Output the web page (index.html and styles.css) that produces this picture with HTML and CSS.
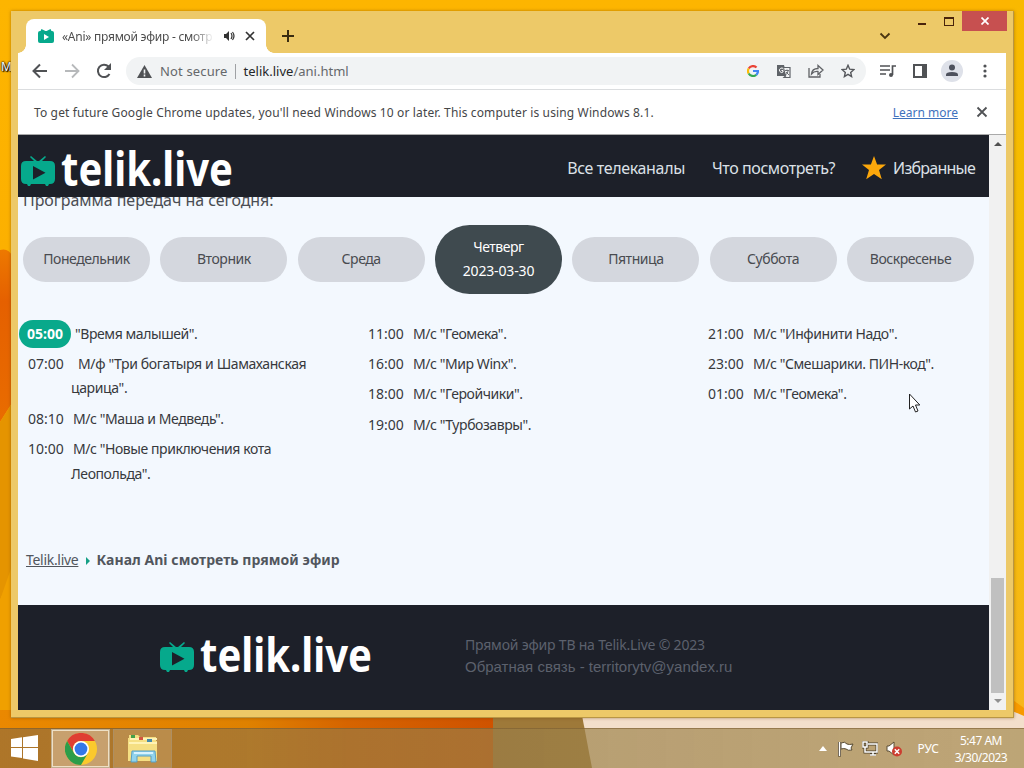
FILE: index.html
```html
<!DOCTYPE html>
<html lang="ru">
<head>
<meta charset="utf-8">
<title>«Ani» прямой эфир</title>
<link rel="stylesheet" href="styles.css">
</head>
<body>
<svg width="0" height="0" class="defs">
  <symbol id="tv" viewBox="0 0 34 30"><path fill="#06a98c" fill-rule="evenodd" d="M5 5H13L9 1L10 0L16 5H18L24 0L25 1L21 5H29Q34 5 34 10V23Q34 28 29 28H28L27 30H25L24 28H10L9 30H7L6 28H5Q0 28 0 23V10Q0 5 5 5ZM12 10V23.500L24.500 16.700Z"/></symbol>
</svg>
<div class="desktop">
  <svg class="wallpaper" viewBox="0 0 1024 768" preserveAspectRatio="none">
    <defs>
      <linearGradient id="ga" x2="0" y2="1"><stop stop-color="#fdb500"/><stop offset="1" stop-color="#faa600"/></linearGradient>
      <linearGradient id="gb" x2="0" y2="1"><stop stop-color="#ed7900"/><stop offset=".3" stop-color="#e56000"/><stop offset="1" stop-color="#e96c00"/></linearGradient>
      <linearGradient id="gc"><stop stop-color="#ea8800"/><stop offset=".5" stop-color="#df8100"/><stop offset=".7" stop-color="#d66400"/><stop offset="1" stop-color="#cf5200"/></linearGradient>
      <linearGradient id="gd" x2="0" y2="1"><stop stop-color="#f9b900"/><stop offset=".5" stop-color="#f3c000"/><stop offset="1" stop-color="#f8b61c"/></linearGradient>
    </defs>
    <rect width="1024" height="768" fill="url(#ga)"/>
    <path d="M0 250Q10 247 14 260V400L0 422Z" fill="url(#gb)"/>
    <path d="M0 422L14 400V570L0 600Z" fill="#e59400"/>
    <path d="M0 600L14 560V768H0Z" fill="#f0a000"/>
    <path d="M0 710H496V768H0Z" fill="url(#gc)"/>
    <path d="M493 710H582L594 768H493Z" fill="#9e7939"/>
    <path d="M581 710H1024V768H592Z" fill="#f3dfcb"/>
    <rect x="1010" width="14" height="709" fill="url(#gd)"/>
    <path d="M1010 698L1024 708V716L1010 710Z" fill="#f79a00"/>
  </svg>
  <div class="shortcut">M</div>

  <main class="window">
    <div class="tabstrip">
      <div class="tab">
        <svg class="favicon" width="17" height="15"><rect y="2" width="16" height="12" rx="2" fill="#06a98c"/><path d="M3 1l4 2M13 1L9 3" stroke="#06a98c" stroke-width="2"/><path d="M6 5v6l5-3z" fill="#fff"/></svg>
        <span class="tab-title">«Ani» прямой эфир - смотр</span>
        <svg class="speaker" width="12" height="12" fill="#333"><path d="M1 4h2l3-3v10L3 8H1z"/><path d="M8 3q2 3 0 6M9.500 2q3 4 0 8" fill="none" stroke="#333" stroke-width="1.200"/></svg>
        <svg width="10" height="10" stroke="#333" stroke-width="1.700"><path d="M1 1l8 8M9 1L1 9"/></svg>
      </div>
      <svg class="newtab" width="14" height="14" stroke="#3a2c10" stroke-width="2"><path d="M7 1v12M1 7h12"/></svg>
      <svg class="chevron" width="12" height="8" fill="none" stroke="#4b3510" stroke-width="1.800"><path d="M1.500 1.500L6 6l4.500-4.500"/></svg>
      <div class="controls">
        <i class="min"></i><i class="max"></i>
        <div class="close"><svg width="8" height="8" stroke="#fff" stroke-width="1.700"><path d="M.5.5l7 7M7.500.5l-7 7"/></svg></div>
      </div>
    </div>
    <div class="toolbar">
      <svg width="16" height="16" fill="none" stroke="#505255" stroke-width="2"><path d="M15 8H2M8 1.500L1.500 8L8 14.500"/></svg>
      <svg width="16" height="16" fill="none" stroke="#b7b9bb" stroke-width="1.800"><path d="M1 8h13M8 1.500L14.500 8L8 14.500"/></svg>
      <svg width="16" height="16" fill="none" stroke="#505255" stroke-width="2"><path d="M13.500 11A6.200 6.200 0 1 1 12.500 3.500L14 5"/><path d="M15 0v7H8z" fill="#505255" stroke="none"/></svg>
      <div class="omnibox">
        <svg width="15" height="13"><path d="M7.500 0L15 13H0z" fill="#505255"/><path d="M7.500 4.500v4M7.500 9.500v2" stroke="#f1f3f4" stroke-width="1.600"/></svg>
        <span class="insecure">Not secure</span><i class="bar"></i><span class="url"><b>telik.live</b>/ani.html</span>
        <span class="omni-icons">
          <svg width="12" height="12" fill="none" stroke-width="2.200"><path d="M9.500 2.500A5 5 0 0 0 1.700 3.500" stroke="#ea4335"/><path d="M1.700 3.500A5 5 0 0 0 1.700 8.500" stroke="#fbbc05"/><path d="M1.700 8.500A5 5 0 0 0 9.300 9.800" stroke="#34a853"/><path d="M9.300 9.800A5 5 0 0 0 11 6H6" stroke="#4285f4"/></svg>
          <svg width="15" height="15"><path d="M1 1h7l3 11H1z" fill="#5f6368"/><path d="M8 3.500h6v10H8l2-2" fill="#f1f3f4" stroke="#5f6368" stroke-width="1.200"/><path d="M7.500 5A2.200 2.200 0 1 0 7 8V6.500H5.500" fill="none" stroke="#fff"/><path d="M9 6.500h4M11 5.500v1M9 11q3-1 3-4M10 8l3 3" fill="none" stroke="#5f6368" stroke-width=".9"/></svg>
          <svg width="16" height="14" fill="none" stroke="#606266" stroke-width="1.300"><path d="M1 4v9h11v-3"/><path d="M3.500 10Q4 4.500 10 4.500V1.500L15 6l-5 4.500V7.500Q6 7 3.500 10z"/></svg>
          <svg width="14" height="14" fill="none" stroke="#55575b" stroke-width="1.400"><path d="M7 1.300l1.700 3.900 4.200.4-3.200 2.800.9 4.200L7 10.400l-3.600 2.200.9-4.200L1.100 5.600l4.200-.4z"/></svg>
        </span>
      </div>
      <div class="tools">
        <svg width="16" height="14" fill="none" stroke="#505255" stroke-width="1.700"><path d="M0 2h10M0 6h10M0 10h6M12.500 11V2H16"/><circle cx="11" cy="11" r="2" fill="#505255" stroke="none"/></svg>
        <svg width="14" height="14"><path d="M0 0h14v14H0z" fill="#505255"/><path d="M2 2h7v10H2z" fill="#fff"/></svg>
        <svg width="22" height="22"><circle cx="11" cy="11" r="11" fill="#dee1e9"/><g fill="#4d515d"><circle cx="11" cy="7.500" r="3"/><path d="M5 16v-1.500Q5 12 11 12t6 2.500V16z"/></g></svg>
        <svg width="4" height="14" fill="#505255"><circle cx="2" cy="2" r="1.600"/><circle cx="2" cy="7" r="1.600"/><circle cx="2" cy="12" r="1.600"/></svg>
      </div>
    </div>
    <div class="infobar"><span class="notice">To get future Google Chrome updates, you'll need Windows 10 or later. This computer is using Windows 8.1.</span><a class="learn">Learn more</a><svg width="12" height="12" stroke="#505255" stroke-width="1.800"><path d="M1.500 1.500l9 9M10.500 1.500l-9 9"/></svg></div>

    <div class="viewport">
      <div class="page">
        <header class="site-header">
          <svg class="logo" width="214" height="50"><use href="#tv" y="13" width="34" height="30"/><text x="40" y="43" textLength="172" lengthAdjust="spacingAndGlyphs" class="logo-text">telik.live</text></svg>
          <nav><a class="n1">Все телеканалы</a><a class="n2">Что посмотреть?</a><svg width="24" height="24"><path d="M12 0l3.100 8.500H24l-7 5.500 2.800 9.300L12 18l-7.800 5.300L7 14 0 8.500h8.900z" fill="#fca70b"/></svg><a class="n3">Избранные</a></nav>
        </header>
        <div class="heading"><h2>Программа передач на сегодня:</h2></div>
        <div class="days">
          <div class="day"><span>Понедельник</span></div><div class="day"><span>Вторник</span></div><div class="day"><span>Среда</span></div>
          <div class="day active"><span>Четверг</span><span class="date">2023-03-30</span></div>
          <div class="day"><span>Пятница</span></div><div class="day"><span>Суббота</span></div><div class="day"><span>Воскресенье</span></div>
        </div>
        <div class="schedule">
          <ul>
            <li class="now"><time>05:00</time>"Время малышей".</li>
            <li class="wide"><time>07:00</time>М/ф "Три богатыря и Шамаханская<br>царица".</li>
            <li><time>08:10</time>М/с "Маша и Медведь".</li>
            <li><time>10:00</time>М/с "Новые приключения кота<br>Леопольда".</li>
          </ul>
          <ul>
            <li><time>11:00</time>М/с "Геомека".</li>
            <li><time>16:00</time>М/с "Мир Winx".</li>
            <li><time>18:00</time>М/с "Геройчики".</li>
            <li><time>19:00</time>М/с "Турбозавры".</li>
          </ul>
          <ul>
            <li><time>21:00</time>М/с "Инфинити Надо".</li>
            <li><time>23:00</time>М/с "Смешарики. ПИН-код".</li>
            <li><time>01:00</time>М/с "Геомека".</li>
          </ul>
        </div>
        <div class="crumbs"><a>Telik.live</a><i></i><strong>Канал Ani смотреть прямой эфир</strong></div>
        <footer>
          <svg class="logo" width="214" height="50"><use href="#tv" y="13" width="34" height="30"/><text x="40" y="43" textLength="172" lengthAdjust="spacingAndGlyphs" class="logo-text">telik.live</text></svg>
          <div class="legal"><p class="copy">Прямой эфир ТВ на Telik.Live © 2023</p><p class="mail">Обратная связь - territorytv@yandex.ru</p></div>
        </footer>
      </div>
      <div class="scrollbar"><i class="up"></i><i class="thumb"></i><i class="down"></i></div>
    </div>
  </main>

  <div class="taskbar">
    <svg class="start" width="27" height="26" fill="#fff"><path d="M0 4L11 2.300V12H0zM12 2.200L27 0V12H12zM0 13H11V23L0 21.500zM12 13H27V26L12 23.500z"/></svg>
    <div class="task current"><svg width="32" height="32" viewBox="0 0 32 32"><circle cx="16" cy="16" r="16" fill="#fbc92d"/><path d="M2.100 8A16 16 0 0 1 29.900 8H16A8 8 0 0 0 9 20z" fill="#df3e32"/><path d="M2.100 8A16 16 0 0 0 16 32L23 20A8 8 0 0 1 9 20z" fill="#2c9d4a"/><circle cx="16" cy="16" r="8" fill="#fff"/><circle cx="16" cy="16" r="6.400" fill="#3478e8"/></svg></div>
    <div class="task"><svg width="32" height="30"><path d="M2 4V1h9l2 2h16v4h1v20H1V4z" fill="#f5df83"/><path d="M3 5h27M2 9h28" stroke="#fff3b5" stroke-width="2"/><path d="M4 1h4v3H4z" fill="#43a04a"/><path d="M12 3h4v3h-4z" fill="#d45440"/><path d="M20 5h5v3h-5z" fill="#458aaa"/><path d="M5 17h23l1 11h-5v-6H10v6H4z" fill="#91d3ec" stroke="#599fc3"/><path d="M7 19h19" stroke="#d7f3ff" stroke-width="2"/></svg></div>
    <div class="tray">
      <svg width="8" height="5"><path d="M0 5l4-5 4 5z" fill="#fff"/></svg>
      <svg width="16" height="16"><path d="M1.500 1v14.500" stroke="#493d29" stroke-width="3"/><path d="M3 2q4-2 6 1 2 1 6 0l-2 4 1 2q-4 1-6-1-2-1-5 0z" fill="#fff" stroke="#584b32"/><path d="M1.500 1v14" stroke="#fff" stroke-width="1.500"/></svg>
      <svg width="16" height="15" fill="none"><path d="M6 3h9v8H6M8 14h6M11 11v3M1 1h4v5H1zM3 6v5h3" stroke="#4c422e" stroke-width="3"/><path d="M6 3h9v8H6M8 14h6M11 11v3M1 1h4v5H1zM3 6v5h3" stroke="#fff" stroke-width="1.500"/></svg>
      <svg width="17" height="16"><path d="M1 5h2l5-4v13L3 10H1z" fill="#fff" stroke="#5a4d35"/><circle cx="11" cy="10.500" r="5" fill="#cc3d30"/><path d="M8.800 8.300l4.400 4.400M13.200 8.300l-4.400 4.400" stroke="#fff" stroke-width="1.500"/></svg>
      <span class="lang">РУС</span>
      <div class="clock"><span>5:47 AM</span><span>3/30/2023</span></div>
    </div>
  </div>
  <svg class="cursor" width="13" height="20"><path d="M1.500 1v15l3.500-3 2.500 6 2.500-1-2.500-6h4.300z" fill="#fff" stroke="#222"/></svg>
</div>
</body>
</html>
```
FILE: styles.css
```css
* { box-sizing: border-box; }
body { margin: 0; font-family: "Noto Sans", "Open Sans", sans-serif; }
svg { display: block; flex: none; }
i { font-style: normal; }
span, a, strong, h2, p { white-space: nowrap; }
.defs { position: absolute; }
.desktop { position: relative; width: 1024px; height: 768px; overflow: hidden; display: flex; flex-direction: column; }
.wallpaper { position: absolute; inset: 0; width: 1024px; height: 768px; }
.shortcut { position: absolute; left: 1px; top: 58px; font-size: 12px; color: #fff; text-shadow: 1px 1px 1px #000, 0 0 2px #000, 0 0 2px #000; }
.window { position: relative; width: 1003px; height: 707px; margin: 11px 0 0 11px; padding: 0 7px 6px; background: #edc968; border: 1px solid #b99644; border-width: 0 1px 1px 0; display: flex; flex-direction: column; box-shadow: 0 0 3px rgba(110,65,0,.5); }
.tabstrip { height: 42px; flex: none; display: flex; align-items: flex-start; }
.tab { position: relative; width: 240px; height: 34px; margin: 8px 0 0 8px; background: #fff; border-radius: 8px 8px 0 0; display: flex; align-items: center; padding: 0 11px 0 12px; }
.tab::before, .tab::after { content: ""; position: absolute; bottom: 0; width: 8px; height: 8px; left: -8px; background: radial-gradient(circle at 0 0, transparent 7.5px, #fff 8px); }
.tab::after { left: auto; right: -8px; background: radial-gradient(circle at 100% 0, transparent 7.5px, #fff 8px); }
.tab-title { font-size: 12px; width: 152px; margin-left: 7px; overflow: hidden; color: #4d4d4d; letter-spacing: -.25px; -webkit-mask-image: linear-gradient(90deg,#000 85%,transparent); mask-image: linear-gradient(90deg,#000 85%,transparent); }
.speaker { margin: 0 10px 0 9px; }
.newtab { margin: 18px 0 0 15px; }
.chevron { margin: 21px 0 0 auto; }
.controls { display: flex; margin: 0 -1px 0 26px; align-items: flex-start; }
.min { width: 8px; height: 2px; background: #49230b; margin: 12px 18px 0 1px; }
.max { width: 10px; height: 9px; border: 1px solid #49230b; border-top-width: 2px; margin: 6px 8px 0 0; }
.close { width: 45px; height: 20px; background: #c75050; display: grid; place-items: center; }
.toolbar { height: 37px; background: #fff; flex: none; display: flex; align-items: center; gap: 16px; padding-left: 14px; border-bottom: 1px solid #dbdddf; }
.omnibox { height: 28px; width: 740px; margin-left: -2px; margin-right: -2px; border-radius: 14px; background: #f1f3f4; display: flex; align-items: center; padding-left: 11px; font-size: 13px; color: #65686b; }
.insecure { margin-left: 8px; letter-spacing: .15px; }
.bar { width: 1px; height: 15px; background: #9fa1a4; margin: 0 8px 0 7px; }
.url b { color: #252628; font-weight: 400; }
.omni-icons { display: flex; gap: 17px; margin-left: auto; align-items: center; margin-right: 11px; }
.tools { display: flex; align-items: center; gap: 17px; }
.tools svg:nth-child(3) { margin-left: -3px; }
.tools svg:last-child { margin-left: 3px; }
.infobar { height: 45px; flex: none; background: #fff; display: flex; align-items: center; padding: 0 18px 0 16px; border-bottom: 1px solid #aaa; font-size: 12px; color: #454648; }
.notice { letter-spacing: .135px; }
.learn { margin-left: auto; margin-right: 18px; color: #3f72bd; text-decoration: underline; }
.viewport { height: 575px; flex: none; display: flex; }
.page { width: 971px; background: #f3f8fe; display: flex; flex-direction: column; font-size: 14px; color: #37393d; }
.site-header { height: 62px; flex: none; background: #1d2029; display: flex; justify-content: space-between; padding: 8px 14px 0 3px; }
.logo-text { font: 700 46px "Noto Sans", sans-serif; fill: #fff; }
.site-header nav { display: flex; height: 50px; align-items: center; font-size: 16px; color: #dce0e7; }
.site-header nav svg { margin: 0 7px 0 27px; }
.n1 { letter-spacing: -.35px; }
.n2 { margin-left: 27px; letter-spacing: -.42px; }
.n3 { letter-spacing: -.75px; }
.heading { height: 40px; flex: none; padding-left: 5px; }
.site-header { position: relative; z-index: 1; }
h2 { margin: -9px 0 0; font-size: 16px; line-height: 24px; font-weight: 400; letter-spacing: -.05px; color: #4a4d53; }
.days { height: 69px; margin-top: -12px; flex: none; padding: 0 15px 0 5px; display: flex; align-items: center; justify-content: space-between; }
.day { width: 127px; height: 45px; border-radius: 23px; background: #d4d7de; display: flex; flex-direction: column; justify-content: center; align-items: center; line-height: 24px; color: #494b50; padding-bottom: 1px; letter-spacing: -.45px; }
.active { height: 69px; border-radius: 35px; background: #3f4a4f; color: #fff; }
.date { letter-spacing: -.15px; }
.schedule { height: 226px; margin-top: 27.500px; flex: none; display: grid; grid-template-columns: 340px 340px 1fr; }
ul { list-style: none; margin: 0; padding: 0 0 0 53px; }
li { line-height: 24.400px; margin-bottom: 6px; text-indent: -43px; white-space: nowrap; letter-spacing: -.43px; }
time { display: inline-block; text-indent: 0; letter-spacing: 0; width: 36px; margin-right: 9px; }
.wide time { margin-right: 14px; }
.wide { letter-spacing: -.37px; }
.now time { width: 52px; height: 28px; line-height: 28px; margin: -2px 4px -2px -9px; background: #09a98b; color: #fff; border-radius: 14px; text-align: center; font-weight: 700; }
.crumbs { display: flex; align-items: center; height: 24px; margin: 0 0 0 8px; color: #51565d; }
.crumbs a { text-decoration: underline; letter-spacing: -.3px; }
.crumbs strong { letter-spacing: .05px; }
.crumbs i { border-left: 4px solid #159f85; border-top: 4px solid transparent; border-bottom: 4px solid transparent; margin: 2px 6px 0 8px; }
footer { height: 105px; margin-top: auto; flex: none; background: #1d2029; display: flex; padding: 24px 0 0 142px; }
.legal { margin-left: 91px; padding-top: 5px; color: #5c616d; }
.legal p { margin: 0; line-height: 22px; }
.copy { letter-spacing: -.2px; }
.mail { font: 15px "Liberation Sans", sans-serif; }
.scrollbar { width: 17px; background: #f1f1f1; display: flex; flex-direction: column; align-items: center; }
.up { border: 4px solid transparent; border-bottom-color: #505050; border-top: 0; margin-top: 7px; }
.thumb { width: 13px; height: 115px; background: #c0c0c0; margin-top: auto; }
.down { border: 4px solid transparent; border-top-color: #909090; border-bottom: 0; margin: 6px 0 7px; }
.taskbar { position: relative; height: 40px; margin-top: auto; flex: none; display: flex; background: linear-gradient(90deg,rgba(148,109,58,.7),rgba(156,129,73,.68) 58%,rgba(156,129,66,.62)); border-top: 1px solid rgba(120,90,45,.55); }
.start { margin: 6px 13px 0 11px; }
.task { width: 59px; height: 39px; border: 1px solid #d3b384; background: rgba(220,190,145,.3); display: grid; place-items: center; margin-right: 3px; outline: 1px solid rgba(90,60,20,.3); outline-offset: -1px; }
.current { border: 2px solid #eee0c6; background: rgba(220,195,165,.55); }
.tray { margin-left: auto; display: flex; align-items: center; color: #fff; gap: 8px; font-size: 12px; padding-right: 16px; }
.tray svg:first-child { margin-right: 3px; }
.lang { margin-left: 6px; }
.clock { width: 54px; margin-left: 7px; display: flex; flex-direction: column; align-items: center; line-height: 17px; letter-spacing: -.5px; }
.cursor { position: absolute; left: 908px; top: 393px; }
```
